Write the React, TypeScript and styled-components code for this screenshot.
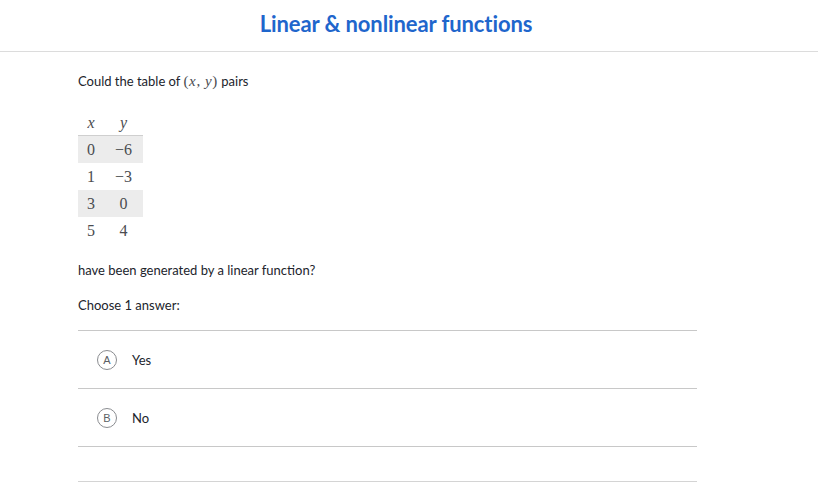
import React from 'react';
import styled, { createGlobalStyle } from 'styled-components';

const GlobalStyle = createGlobalStyle`
  html, body {
    margin: 0;
    padding: 0;
    background: #fff;
  }
  body {
    font-family: Lato, 'Noto Sans', sans-serif;
    color: #21242c;
  }
`;

const Page = styled.div`
  width: 818px;
  height: 488px;
  overflow: hidden;
`;

const Header = styled.header`
  height: 52px;
  padding-right: 26px;
  border-bottom: 1px solid #dcdcdc;
  display: flex;
  align-items: center;
  justify-content: center;
  box-sizing: border-box;
`;

const Title = styled.h1`
  margin: 0 0 4px;
  font-size: 22px;
  font-weight: 700;
  color: #1f66cc;
  letter-spacing: -0.1px;
`;

const Content = styled.main`
  padding: 20px 0 0 78px;
  width: 619px;
`;

const Para = styled.p<{ $gap?: number }>`
  margin: 0 0 ${p => p.$gap ?? 0}px;
  font-size: 13px;
  line-height: 18px;
`;

const Math = styled.span`
  font-family: 'Liberation Serif', 'DejaVu Serif', serif;
  font-size: 15px;
  letter-spacing: 0.6px;
  color: #4a4c50;
`;

const Var = styled.i`
  font-family: 'Liberation Serif', 'DejaVu Serif', serif;
`;

const Table = styled.table`
  border-collapse: collapse;
  margin: 21px 0 17px;
  font-family: 'Liberation Serif', 'DejaVu Serif', serif;
  font-size: 16px;
  color: #4a4c50;
`;

const HeadCell = styled.th<{ $w: number }>`
  width: ${p => p.$w}px;
  height: 24px;
  padding: 0;
  font-weight: 400;
  font-style: italic;
  text-align: center;
  border-bottom: 1px solid #cfcfcf;
`;

const Row = styled.tr<{ $shade: boolean }>`
  background: ${p => (p.$shade ? '#ececec' : 'transparent')};
`;

const Cell = styled.td`
  height: 27px;
  padding: 0;
  text-align: center;
`;

const Choices = styled.ul`
  list-style: none;
  margin: 16px 0 0;
  padding: 0;
  border-top: 1px solid #c8c8c8;
`;

const Choice = styled.li`
  height: 58px;
  box-sizing: border-box;
  display: flex;
  align-items: center;
  gap: 15px;
  padding-left: 19px;
  border-bottom: 1px solid #c8c8c8;
  font-size: 13px;
`;

const Letter = styled.span`
  width: 20px;
  height: 20px;
  border-radius: 50%;
  border: 1px solid #8a8c90;
  display: flex;
  align-items: center;
  justify-content: center;
  font-family: 'Liberation Sans', Arial, sans-serif;
  font-size: 11px;
  color: #5c5f66;
  box-sizing: border-box;
`;

const Spacer = styled.div`
  height: 34px;
  border-bottom: 1px solid #d4d4d4;
`;

const rows: [string, string][] = [
  ['0', '\u22126'],
  ['1', '\u22123'],
  ['3', '0'],
  ['5', '4'],
];

const choices = [
  { key: 'A', label: 'Yes' },
  { key: 'B', label: 'No' },
];

export default function App() {
  return (
    <Page>
      <GlobalStyle />
      <Header>
        <Title>Linear &amp; nonlinear functions</Title>
      </Header>
      <Content>
        <Para>
          Could the table of{' '}
          <Math>
            (<Var>x</Var>, <Var>y</Var>)
          </Math>{' '}
          pairs
        </Para>
        <Table>
          <thead>
            <tr>
              <HeadCell $w={26}>x</HeadCell>
              <HeadCell $w={39}>y</HeadCell>
            </tr>
          </thead>
          <tbody>
            {rows.map(([x, y], i) => (
              <Row key={i} $shade={i % 2 === 0}>
                <Cell>{x}</Cell>
                <Cell>{y}</Cell>
              </Row>
            ))}
          </tbody>
        </Table>
        <Para $gap={17}>have been generated by a linear function?</Para>
        <Para>Choose 1 answer:</Para>
        <Choices>
          {choices.map(c => (
            <Choice key={c.key}>
              <Letter>{c.key}</Letter>
              {c.label}
            </Choice>
          ))}
        </Choices>
        <Spacer />
      </Content>
    </Page>
  );
}
